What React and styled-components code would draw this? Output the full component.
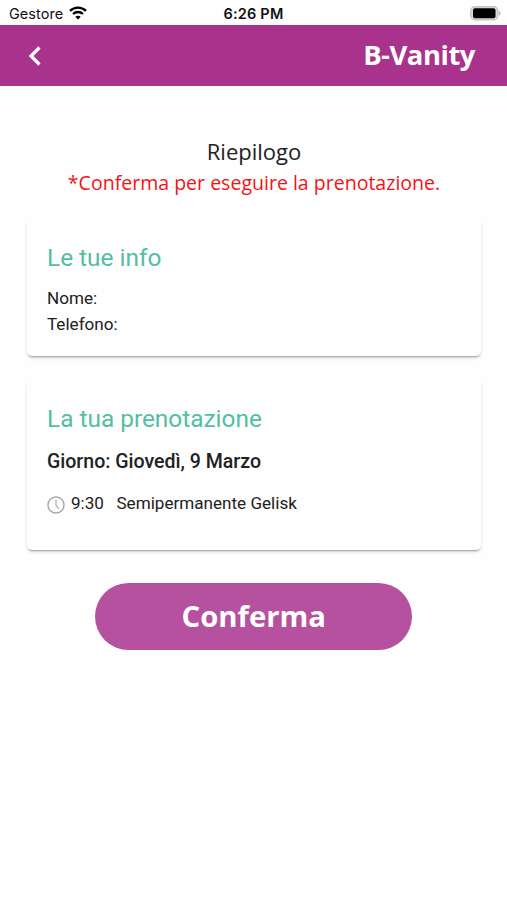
import React from "react";
import styled, { createGlobalStyle } from "styled-components";

const GlobalStyle = createGlobalStyle`
  * {
    box-sizing: border-box;
  }
  body {
    margin: 0;
    background-color: #fefefe;
    font-family: Roboto, sans-serif;
    color: #212121;
  }
`;

const Page = styled.div`
  min-height: 900px;
  overflow: hidden;
`;

const StatusBar = styled.div`
  display: grid;
  grid-template-columns: 1fr auto 1fr;
  align-items: center;
  height: 25px;
  padding: 2px 6px 0 9px;
  font-family: Inter, sans-serif;
  font-size: 14.5px;
  color: #111;
`;

const Carrier = styled.div`
  display: flex;
  align-items: center;
  gap: 6px;
  letter-spacing: 0.05px;

  svg {
    margin-top: -2px;
  }
`;

const Clock = styled.div`
  margin-right: 3px;
  font-size: 14.5px;
  font-weight: 600;
  letter-spacing: 0.2px;
`;

const Battery = styled.svg`
  justify-self: end;
`;

const Header = styled.header`
  display: flex;
  align-items: center;
  justify-content: space-between;
  height: 61px;
  padding: 0 32px 1px 28px;
  background-color: #a9328c;
  color: #fff;
`;

const BackButton = styled.button`
  display: flex;
  padding: 1px 0 0;
  border: none;
  background: none;
  color: inherit;
`;

const Brand = styled.h1`
  margin: 0;
  font-family: "Open Sans", sans-serif;
  font-size: 27.5px;
  font-weight: 700;
  letter-spacing: -0.5px;
  line-height: 38px;
`;

const Content = styled.main`
  display: flex;
  flex-direction: column;
  padding: 49px 26px 0 27px;
`;

const Title = styled.h2`
  margin: 0 0 1px;
  font-family: "Open Sans", sans-serif;
  font-size: 22px;
  font-weight: 400;
  line-height: 32px;
  text-align: center;
`;

const Notice = styled.p`
  margin: 0 0 21px;
  font-family: "Open Sans", sans-serif;
  font-size: 19.55px;
  line-height: 30px;
  text-align: center;
  color: #f41414;
`;

const Card = styled.section`
  height: ${({ $height }) => $height}px;
  margin-bottom: 24px;
  padding: 23px 20px;
  border-radius: 5px;
  background-color: #fefefe;
  box-shadow: 0 3px 1px -2px rgba(0, 0, 0, 0.2),
    0 2px 2px 0 rgba(0, 0, 0, 0.12), 0 3px 4px 0 rgba(0, 0, 0, 0.05);
`;

const CardTitle = styled.h3`
  margin: 0 0 11px;
  font-size: 24.4px;
  font-weight: 400;
  line-height: 32px;
  color: #53bea3;
`;

const Line = styled.p`
  margin: 0;
  font-size: 17.1px;
  line-height: 26px;
`;

const Day = styled.p`
  margin: 14px 0 15px;
  font-size: 19.55px;
  font-weight: 500;
  line-height: 26px;
`;

const Booking = styled.div`
  display: flex;
  align-items: center;
  font-size: 17.1px;
  line-height: 26px;

  svg {
    margin-top: 3px;
  }
`;

const Time = styled.span`
  margin: 0 12.5px 0 6px;
`;

const ConfirmButton = styled.button`
  align-self: center;
  width: 317px;
  height: 67px;
  margin: 8.5px 0.5px 0 0;
  padding: 0;
  border: none;
  border-radius: 34px;
  background-color: #b5519f;
  color: #fff;
  font-family: "Open Sans", sans-serif;
  font-size: 29.3px;
  font-weight: 700;
`;

const WifiIcon = () => (
  <svg width="18" height="14" viewBox="0 0 18 14" fill="none" stroke="#000">
    <path d="M1 4.8C5.5 0.5 12.5 0.5 17 4.8" strokeWidth="2.4" />
    <path d="M4 8C6.8 5.3 11.2 5.3 14 8" strokeWidth="2.3" />
    <path d="M9 13.4L6.3 10.7C7.8 9.3 10.2 9.3 11.7 10.7Z" fill="#000" stroke="none" />
  </svg>
);

const BatteryIcon = () => (
  <Battery width="31" height="15" viewBox="0 0 31 15">
    <rect x="0.8" y="0.8" width="27" height="13" rx="4" fill="#ddd" stroke="#c4c4c4" strokeWidth="1.4" />
    <rect x="3" y="2.3" width="22.5" height="10" rx="2" fill="#000" />
    <path d="M29 5C31 6 31 8.500 29 9.500Z" fill="#aaa" />
  </Battery>
);

const BackIcon = () => (
  <svg width="14" height="20" viewBox="0 0 14 20" fill="none" stroke="currentColor">
    <path d="M11.500 1.500L3 10L11.500 18.500" strokeWidth="3.2" />
  </svg>
);

const TimeIcon = () => (
  <svg width="18" height="18" viewBox="0 0 18 18" fill="none" stroke="#aaa">
    <circle cx="9" cy="9" r="8" strokeWidth="1.4" />
    <path d="M9 4V9L11.800 13" strokeWidth="1.2" />
  </svg>
);

const App = () => {
  return (
    <>
      <GlobalStyle />
      <Page>
        <StatusBar>
          <Carrier>
            Gestore
            <WifiIcon />
          </Carrier>
          <Clock>6:26 PM</Clock>
          <BatteryIcon />
        </StatusBar>
        <Header>
          <BackButton aria-label="Indietro">
            <BackIcon />
          </BackButton>
          <Brand>B-Vanity</Brand>
        </Header>
        <Content>
          <Title>Riepilogo</Title>
          <Notice>*Conferma per eseguire la prenotazione.</Notice>
          <Card $height={137}>
            <CardTitle>Le tue info</CardTitle>
            <Line>Nome:</Line>
            <Line>Telefono:</Line>
          </Card>
          <Card $height={170}>
            <CardTitle>La tua prenotazione</CardTitle>
            <Day>Giorno: Giovedì, 9 Marzo</Day>
            <Booking>
              <TimeIcon />
              <Time>9:30</Time>
              Semipermanente Gelisk
            </Booking>
          </Card>
          <ConfirmButton>Conferma</ConfirmButton>
        </Content>
      </Page>
    </>
  );
};

export default App;
